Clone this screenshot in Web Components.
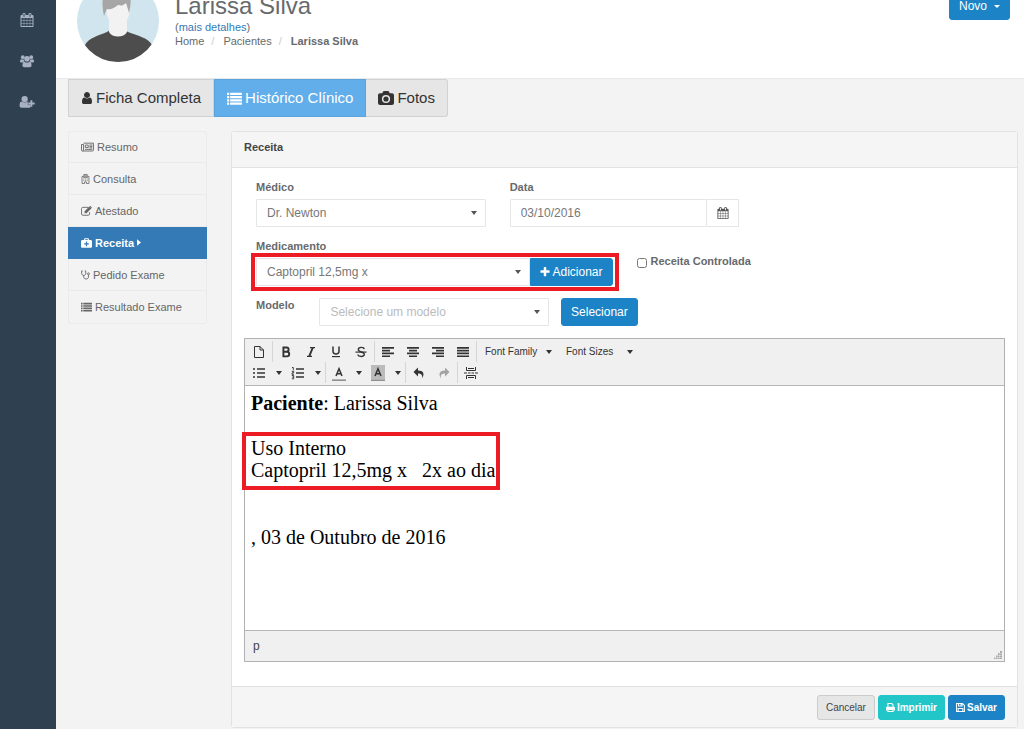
<!DOCTYPE html>
<html lang="pt-BR">
<head>
<meta charset="utf-8">
<meta name="viewport" content="width=device-width, initial-scale=1">
<title>Larissa Silva - Receita</title>
<style>
  html { background: #f3f3f4; }
  body {
    margin: 0;
    font: 11px/14px "Liberation Sans", Arial, sans-serif;
    color: #676a6c;
    --blue: #1c84c6;
    --line: #e5e6e7;
  }
</style>
</head>
<body>
<clinic-app></clinic-app>

<script>
const ICONS = {
  calendar: ['0 0 1792 1792', '<path d="M192 1664h288v-288h-288v288zm352 0h320v-288h-320v288zm-352-352h288v-320h-288v320zm352 0h320v-320h-320v320zm-352-384h288v-288h-288v288zm736 736h320v-288h-320v288zm-384-736h320v-288h-320v288zm768 736h288v-288h-288v288zm-384-352h320v-320h-320v320zm-352-864v-288q0-13-9.5-22.5t-22.5-9.5h-64q-13 0-22.5 9.5t-9.5 22.5v288q0 13 9.5 22.5t22.5 9.5h64q13 0 22.5-9.5t9.5-22.5zm736 864h288v-320h-288v320zm-384-384h320v-288h-320v288zm384 0h288v-288h-288v288zm32-480v-288q0-13-9.5-22.5t-22.5-9.5h-64q-13 0-22.5 9.5t-9.5 22.5v288q0 13 9.5 22.5t22.5 9.5h64q13 0 22.5-9.5t9.5-22.5zm384-64v1280q0 52-38 90t-90 38h-1408q-52 0-90-38t-38-90v-1280q0-52 38-90t90-38h128v-96q0-66 47-113t113-47h64q66 0 113 47t47 113v96h384v-96q0-66 47-113t113-47h64q66 0 113 47t47 113v96h128q52 0 90 38t38 90z"/>'],
  users: ['0 0 16 16', '<circle cx="3.2" cy="3.6" r="2.200"/><circle cx="12.8" cy="3.6" r="2.200"/><circle cx="8" cy="5.4" r="3.200"/><path d="M0 8.6C0 6.8.6 6 1.4 6c.6.4 1.800.6 2.900.2.1 1.100.5 1.800 1 2.300-1 .1-1.800.5-2.300 1.100H1.200C.5 9.600 0 9.300 0 8.600zM16 8.600C16 6.800 15.400 6 14.600 6c-.6.4-1.800.6-2.900.2-.1 1.100-.5 1.800-1 2.300 1 .1 1.800.5 2.300 1.100h1.800c.7 0 1.200-.3 1.200-1zM2.800 13c0-2.600.6-4.200 2.300-4.200 1.700 1.300 4.100 1.300 5.800 0 1.700 0 2.300 1.600 2.300 4.200 0 1.200-.8 2-2 2H4.800c-1.200 0-2-.8-2-2z"/>'],
  userPlus: ['0 0 17 16', '<circle cx="5.800" cy="4.600" r="3.600"/><path d="M0 12.200C0 9.300.8 7.500 2.600 7.500c1.900 1.500 4.500 1.500 6.400 0 .5 0 .9.200 1.300.500H9.400v3h3v3.200c-.3.200-.7.300-1.100.3h-9C.8 14.500 0 13.600 0 12.200z"/><path d="M12.400 6h2.200v2.600h2.700v2.200h-2.700v2.600h-2.200v-2.600H9.900V8.600h2.500z"/>'],
  user: ['192 128 1408 1536', '<path d="M1536 1399q0 109-62.5 187t-150.5 78h-854q-88 0-150.5-78t-62.5-187q0-85 8.5-160.5t31.5-152 58.5-131 94-89 134.5-34.5q131 128 313 128t313-128q76 0 134.5 34.5t94 89 58.5 131 31.5 152 8.5 160.5zm-256-887q0 159-112.5 271.5t-271.5 112.5-271.5-112.5-112.5-271.5 112.5-271.5 271.5-112.5 271.5 112.5 112.5 271.5z"/>'],
  list: ['0 0 16 14', '<path d="M0 .8h2.300v2.400H0zM3.300.8H16v2.400H3.300zM0 4.300h2.300v2.400H0zM3.300 4.300H16v2.400H3.300zM0 7.800h2.300v2.400H0zM3.300 7.800H16v2.400H3.300zM0 11.300h2.300v2.400H0zM3.300 11.300H16v2.400H3.300z"/>'],
  camera: ['0 0 16 14', '<path fill-rule="evenodd" d="M2 2.300h2.300l.6-1.500C5.100.300 5.600 0 6.200 0h3.600c.6 0 1.100.3 1.300.8l.6 1.500H14c1.100 0 2 .9 2 2V12c0 1.100-.9 2-2 2H2c-1.100 0-2-.9-2-2V4.300c0-1.100.9-2 2-2zM8 3.900a4.100 4.100 0 100 8.200 4.100 4.100 0 000-8.200zm0 1.500a2.600 2.600 0 110 5.200 2.600 2.600 0 010-5.200z"/>'],
  news: ['0 0 18 14', '<path fill="none" stroke="currentColor" stroke-width="1.300" d="M3.500 1.600h13.800v9.800c0 .7-.5 1.200-1.200 1.200H2c-.8 0-1.400-.6-1.400-1.400V3.500h2.900v7.600c0 .8-.6 1.500-1.400 1.500M6 4.300h4v3.500H6zM11.700 4.200h4M11.700 6.200h4M11.700 8.200h4M5.500 10.300h10.200"/>'],
  hospital: ['0 0 12 15', '<path fill="none" stroke="currentColor" stroke-width="1.200" d="M3.300 3.600H.8v10.600h3.800v-2.400h2.800v2.400h3.800V3.600H8.700M3.400.8h5.200v4.600H3.400zM5 2v2.200M7 2v2.200M5 3.100h2M2.800 7.500h1.300M5.400 7.500h1.300M8 7.500h1.300M2.800 9.700h1.300M5.400 9.700h1.300M8 9.700h1.300"/>'],
  edit: ['0 0 16 14', '<path fill="none" stroke="currentColor" stroke-width="1.300" d="M11 1.700H2.600c-1 0-1.800.8-1.800 1.800v7.900c0 1 .8 1.800 1.800 1.800h8c1 0 1.800-.8 1.800-1.800V8.800"/><path d="M5.200 7.500 12.300.4l2.800 2.800L8 10.300H5.200zM13 0l.7-.1 1.900 1.800v.8l-.3.400L12.500.4z"/>'],
  medkit: ['0 0 16 14', '<path fill-rule="evenodd" d="M4.500 2.500V1.200C4.500.5 5 0 5.700 0h4.600c.7 0 1.200.5 1.200 1.200v1.300H14c1.100 0 2 .9 2 2V12c0 1.100-.9 2-2 2H2c-1.100 0-2-.9-2-2V4.500c0-1.100.9-2 2-2zM6 2.500h4v-1H6zM7.100 4.800v2.500H4.600v1.800h2.500v2.500h1.800V9.100h2.500V7.300H8.900V4.800z"/>'],
  stethoscope: ['0 0 14 15', '<g fill="none" stroke="currentColor" stroke-width="1.400"><path d="M2.600 1.200H1v3.600c0 2 1.300 3.400 3.200 3.400s3.200-1.400 3.200-3.400V1.200H5.800M4.200 8.200v2.300c0 2 1.500 3.200 3.700 3.200s3.700-1.200 3.700-3.200V7.200"/><circle cx="11.600" cy="5.600" r="1.500"/></g>'],
  right: ['0 0 6 10', '<path d="M0 0l6 5-6 5z"/>'],
  plus: ['128 128 1536 1536', '<path d="M1600 736v192q0 40-28 68t-68 28h-416v416q0 40-28 68t-68 28h-192q-40 0-68-28t-28-68v-416h-416q-40 0-68-28t-28-68v-192q0-40 28-68t68-28h416v-416q0-40 28-68t68-28h192q40 0 68 28t28 68v416h416q40 0 68 28t28 68z"/>'],
  print: ['0 0 14 14', '<path fill="none" stroke="currentColor" stroke-width="1.600" d="M3 6.500V.9h6l2 2v3.600M3 10.200h8v3H3z"/><path fill-rule="evenodd" d="M2 6h10c1.100 0 2 .8 2 1.900v3.600h-2.300V9.300H2.300v2.200H0V7.900C0 6.800.9 6 2 6z"/>'],
  save: ['0 0 14 14', '<path fill="none" stroke="currentColor" stroke-width="1.600" d="M.9.9h9.200l3 3v9.200H.9zM3.400 13V8.500h7.200V13M4 1v3.700h5.400V1"/><path d="M7 1.300h1.700v2.700H7z"/>'],
  page: ['0 0 14 14', '<path fill="none" stroke="currentColor" d="M2.500 1.500h5.500l3.500 3.500v7.500h-9zM8 1.500V5h3.500"/>'],
  bold: ['0 0 14 14', '<path fill="none" stroke="currentColor" stroke-width="1.900" d="M4.400 2.500h3.200c2.700 0 2.700 4.200 0 4.200H4.400zM4.400 6.700h3.500c3.100 0 3.100 4.700 0 4.700H4.400z"/>'],
  italic: ['0 0 14 14', '<path fill="none" stroke="currentColor" stroke-width="1.200" d="M6 2.600h5M3 11.400h5"/><path fill="none" stroke="currentColor" stroke-width="1.900" d="M8.800 2.600 5.200 11.400"/>'],
  underline: ['0 0 14 14', '<path fill="none" stroke="currentColor" stroke-width="1.500" d="M4 1.500v4.800c0 3.600 6 3.600 6 0V1.500"/><path d="M3 11h8v1.200H3z"/>'],
  strike: ['0 0 14 14', '<path fill="none" stroke="currentColor" stroke-width="1.400" d="M10.200 4.200C9.800 1.800 4.400 1.700 4.300 4.500c0 3.100 6 1.900 6 4.900 0 2.800-6 2.600-6.400.1"/><path d="M1.500 6.500h11v1.200h-11z"/>'],
  left: ['0 0 14 14', '<path d="M1 2h12v1.700H1zM1 4.800h8v1.700H1zM1 7.600h12v1.700H1zM1 10.400h8v1.700H1z"/>'],
  center: ['0 0 14 14', '<path d="M1 2h12v1.700H1zM3 4.800h8v1.700H3zM1 7.600h12v1.700H1zM3 10.400h8v1.700H3z"/>'],
  alignRight: ['0 0 14 14', '<path d="M1 2h12v1.700H1zM5 4.800h8v1.700H5zM1 7.600h12v1.700H1zM5 10.400h8v1.700H5z"/>'],
  justify: ['0 0 14 14', '<path d="M1 2h12v1.700H1zM1 4.800h12v1.700H1zM1 7.600h12v1.700H1zM1 10.400h12v1.700H1z"/>'],
  bullets: ['0 0 14 14', '<path d="M1 2.200h2v1.600H1zM1 6.200h2v1.600H1zM1 10.200h2v1.600H1zM5 2.200h8v1.600H5zM5 6.200h8v1.600H5zM5 10.200h8v1.600H5z"/>'],
  numbers: ['0 0 14 14', '<path d="M5 2.200h8v1.600H5zM5 6.200h8v1.600H5zM5 10.200h8v1.600H5z"/><path fill="none" stroke="currentColor" stroke-width=".9" d="M1 1.500h1.300v3M.8 5.500h1.900v1.400H1v1.400h1.900M.8 9.500h1.900v3.300H.8M1.200 11.100h1.500"/>'],
  fore: ['0 0 14 16', '<path fill="none" stroke="currentColor" stroke-width="1.500" d="M4 11 7 3.800 10 11M5 8.700h4"/><path fill="#777" d="M0 14.500h14v1.300H0z"/>'],
  back: ['0 0 14 16', '<path fill="#bbb" d="M0 0h14v14H0z"/><path fill="none" stroke="currentColor" stroke-width="1.500" d="M4 11 7 3.800 10 11M5 8.700h4"/><path fill="#777" d="M0 14.500h14v1.300H0z"/>'],
  undo: ['0 0 14 14', '<path d="M6 1.500v3c5.500 0 7 3.500 4 8 .8-3.500-.5-5-4-5v3L1.500 6z"/>'],
  redo: ['0 0 14 14', '<path d="M8 1.500v3c-5.500 0-7 3.500-4 8-.8-3.500.5-5 4-5v3L12.500 6z"/>'],
  pagebreak: ['0 0 14 14', '<path fill="none" stroke="currentColor" d="M2.500 1v3.500h9V1M2.500 13V9.500h9V13M4 2.500h6M4 11.500h6"/><path d="M0 6.500h3v1H0zM4 6.500h2.500v1H4zM7.500 6.500H10v1H7.500zM11 6.500h3v1h-3z"/>']
};

function define(name, html, extra) {
  const tpl = document.createElement('template');
  tpl.innerHTML = '<style>*,*::before,*::after{box-sizing:border-box}:host{box-sizing:border-box}</style>' + html;
  customElements.define(name, class extends HTMLElement {
    constructor() {
      super();
      this.attachShadow({ mode: 'open' }).append(tpl.content.cloneNode(true));
    }
    connectedCallback() { if (extra) extra(this, this.shadowRoot); }
  });
}

/* Icon: <ui-icon name="user"> sized through --w and --h */
define('ui-icon', `
<style>
  :host { display: inline-block; width: var(--w, 12px); height: var(--h, 12px); vertical-align: middle; flex: none; }
  svg { display: block; width: 100%; height: 100%; fill: currentColor; }
</style>
<svg aria-hidden="true"></svg>`, (el, root) => {
  const [box, body] = ICONS[el.getAttribute('name')];
  const svg = root.querySelector('svg');
  svg.setAttribute('viewBox', box);
  svg.innerHTML = body;
});

/* Push button: kind = primary | info | plain, size = small | medium */
define('ui-button', `
<style>
  :host { display: inline-block; flex: none; }
  button {
    display: flex; align-items: center; gap: 2px; height: 28px; padding: 0 9px;
    border: 1px solid var(--blue); border-radius: 3px; background: var(--blue); color: #fff;
    font: inherit; font-size: 12px; line-height: 16px; white-space: nowrap; cursor: pointer;
  }
  :host([size=small]) button { height: 25px; padding: 0 7px; font-size: 10px; }
  :host([kind=info]) button { background: #23c6c8; border-color: #23c6c8; }
  :host([kind=plain]) button { padding: 0 8px; background: #e6e6e6; border-color: #ccc; color: #444; }
  :host([joined]) button { border-radius: 0 3px 3px 0; }
</style>
<button type="button"><slot></slot></button>`);

/* Drop-down with a caret at the right */
define('ui-select', `
<style>
  :host { display: grid; position: relative; min-width: 0; }
  label { display: none; }
  :host([label]) label { display: block; font-weight: bold; margin-bottom: 5px; }
  select {
    appearance: none; width: 100%; height: 28px; padding: 0 24px 0 10px; margin: 0;
    border: 1px solid var(--line); border-radius: 1px; background: #fff; color: #777;
    font: inherit; font-size: 12px;
  }
  :host([placeholder]) select { color: #bbb; }
  i {
    position: absolute; right: 9px; bottom: 12px; pointer-events: none;
    border: 3px solid transparent; border-top: 4px solid #555; border-bottom: 0;
  }
</style>
<label for="s"></label>
<select id="s"></select><i></i>`, (el, root) => {
  root.querySelector('label').textContent = el.getAttribute('label') || '';
  const select = root.querySelector('select');
  select.replaceChildren(new Option(el.getAttribute('value')));
  if (!el.hasAttribute('label')) select.setAttribute('aria-label', el.getAttribute('name'));
});

define('nav-rail', `
<style>
  :host { display: block; background: #2f4050; }
  nav { display: grid; justify-items: center; row-gap: 25px; padding: 12px 2px 0 0; --w: 14px; --h: 14px; }
  a { display: flex; height: 16px; align-items: center; color: #a7b1c2; }
</style>
<nav>
  <a href="#agenda" aria-label="Agenda"><ui-icon name="calendar"></ui-icon></a>
  <a href="#pacientes" aria-label="Pacientes"><ui-icon name="users"></ui-icon></a>
  <a href="#novo" aria-label="Novo paciente"><ui-icon name="userPlus" style="--w:16px"></ui-icon></a>
</nav>`);

define('patient-header', `
<style>
  :host { display: block; background: #fff; border-bottom: 1px solid #e7eaec; overflow: hidden; }
  header { display: flex; margin-top: -20px; padding: 0 14px 16px 21px; }
  .avatar { flex: none; width: 82px; height: 82px; border-radius: 50%; }
  .who { flex: 1; padding: 12px 16px 0; }
  h2 { margin: 0; font-size: 24px; line-height: 28px; font-weight: normal; }
  a { color: #337ab7; text-decoration: none; }
  ol { display: flex; margin: 0; padding: 0; list-style: none; line-height: 14px; }
  ol a { color: inherit; }
  li + li::before { content: "/"; color: #ccc; padding: 0 9px 0 7px; }
  ui-button { margin-top: 12px; }
  i { border: 3px solid transparent; border-top: 3px solid #fff; border-bottom: 0; margin-left: 5px; }
</style>
<header>
  <svg class="avatar" viewBox="0 0 82 82" role="img" aria-label="Foto do paciente">
    <path fill="#d0e5ee" d="M0 0h82v82H0z"/>
    <path fill="#4d4d4d" d="M8 65c4-7 12-9 22-13l3-2h15l3 2c11 4 20 6 24 13v17H8z"/>
    <path fill="#f2f2f2" d="M32 24h18v28c-3 6-15 6-18 0z"/>
    <ellipse cx="41" cy="27" rx="12" ry="20" fill="#f2f2f2"/>
    <path fill="#a6a6a6" d="M27 36C22 12 30 6 41 6c12 0 15 10 11 27-1-4-2-7-3-10-5 4-5 2-8 2-5 4-8 5-11 4-1 2-2 4-3 7z"/>
  </svg>
  <div class="who">
    <h2>Larissa Silva</h2>
    <div>(<a href="#detalhes">mais detalhes</a>)</div>
    <ol>
      <li><a href="#home">Home</a></li>
      <li><a href="#pacientes">Pacientes</a></li>
      <li><b>Larissa Silva</b></li>
    </ol>
  </div>
  <ui-button>Novo <i></i></ui-button>
</header>`);

define('tab-bar', `
<style>
  :host { display: flex; }
  a {
    display: flex; align-items: center; gap: 3px; height: 38px; padding: 0 12px;
    background: #e6e6e6; border: 1px solid #d2d2d2; color: #333;
    font-size: 15px; line-height: 20px; text-decoration: none; white-space: nowrap;
  }
  a:first-child { border-radius: 3px 0 0 3px; border-right: 0; padding-left: 13px; --w: 12px; --h: 13px; }
  a:last-child { border-radius: 0 3px 3px 0; border-left: 0; --w: 16px; --h: 14px; }
  .on { background: #62aeea; border-color: #5ba3dd; color: #fff; --w: 15px; --h: 13px; }
</style>
<a href="#ficha"><ui-icon name="user"></ui-icon>Ficha Completa</a>
<a class="on" href="#historico"><ui-icon name="list"></ui-icon>Histórico Clínico</a>
<a href="#fotos"><ui-icon name="camera"></ui-icon>Fotos</a>`);

define('side-menu', `
<style>
  :host { display: block; }
  nav { border: 1px solid #ebebeb; border-top: 0; border-radius: 3px; --h: 10px; box-shadow: inset 0 1px #ebebeb; }
  a {
    display: flex; align-items: center; gap: 3px; height: 32px; padding: 0 12px;
    color: #666; text-decoration: none; border-bottom: 1px solid #eaeaea;
  }
  a:last-child { border-bottom: 0; }
  .on { background: #337ab7; border-color: #337ab7; color: #fff; margin: 0 -1px; padding: 0 13px; font-weight: bold; }
</style>
<nav>
  <a href="#resumo"><ui-icon name="news" style="--w:13px"></ui-icon>Resumo</a>
  <a href="#consulta"><ui-icon name="hospital" style="--w:9px"></ui-icon>Consulta</a>
  <a href="#atestado"><ui-icon name="edit" style="--w:11px"></ui-icon>Atestado</a>
  <a class="on" href="#receita"><ui-icon name="medkit" style="--w:11px"></ui-icon>Receita<ui-icon name="right" style="--w:4px;--h:7px"></ui-icon></a>
  <a href="#pedido"><ui-icon name="stethoscope" style="--w:9px"></ui-icon>Pedido Exame</a>
  <a href="#resultado"><ui-icon name="list" style="--w:11px"></ui-icon>Resultado Exame</a>
</nav>`);

/* Highlight frame drawn over whatever is slotted */
define('mark-frame', `
<style>
  :host { display: block; position: relative; }
  :host::after {
    content: ""; position: absolute; inset: var(--out, -5px -6px -5px -5px); border: 4px solid #ed1c24; pointer-events: none;
  }
</style>
<slot></slot>`);

define('rich-editor', `
<style>
  :host { display: block; border: 1px solid #b1b1b1; background: #fff; }
  [role=toolbar] { background: #f0f0f0; border-bottom: 1px solid #b7b7b7; padding: 2px 1px; color: #333; }
  .row { display: flex; height: 21px; }
  .group { display: flex; gap: 1px; padding: 0 1px; }
  .group + .group { border-left: 1px solid #d6d6d6; }
  button {
    display: flex; align-items: center; justify-content: center; width: 24px; height: 21px;
    padding: 0; border: 0; background: none; color: inherit; font: inherit; font-size: 10px; white-space: nowrap;
    --w: 14px; --h: 14px;
  }
  button.drop { width: 13px; }
  button.menu { width: 80px; justify-content: space-between; padding: 0 6px 0 7px; }
  button.off { opacity: .4; }
  button.tall { --h: 16px; }
  i { border: 3px solid transparent; border-top: 4px solid #333; border-bottom: 0; }
  .page { min-height: 244px; padding: 6px; font: 20px/22px "Liberation Serif", "Times New Roman", serif; color: #000; outline: 0; }
  p { margin: 0 0 23px; }
  mark-frame { width: fit-content; margin-bottom: 45px; --out: -5px -5px -9px -9px; }
  mark-frame p { margin: 0; white-space: pre-wrap; }
  footer { display: flex; justify-content: space-between; height: 31px; padding: 8px 8px 0; background: #f0f0f0; border-top: 1px solid #b7b7b7; font-size: 12px; color: #444; }
  .grip { align-self: flex-end; width: 8px; height: 8px; margin: 0 -6px 2px 0; fill: #aaa; }
</style>
<div role="toolbar" aria-label="Formatação">
  <div class="row">
    <div class="group"><button aria-label="Novo documento"><ui-icon name="page"></ui-icon></button></div>
    <div class="group">
      <button aria-label="Negrito"><ui-icon name="bold"></ui-icon></button>
      <button aria-label="Itálico"><ui-icon name="italic"></ui-icon></button>
      <button aria-label="Sublinhado"><ui-icon name="underline"></ui-icon></button>
      <button aria-label="Tachado"><ui-icon name="strike"></ui-icon></button>
    </div>
    <div class="group">
      <button aria-label="Alinhar à esquerda"><ui-icon name="left"></ui-icon></button>
      <button aria-label="Centralizar"><ui-icon name="center"></ui-icon></button>
      <button aria-label="Alinhar à direita"><ui-icon name="alignRight"></ui-icon></button>
      <button aria-label="Justificar"><ui-icon name="justify"></ui-icon></button>
    </div>
    <div class="group">
      <button class="menu">Font Family<i></i></button>
      <button class="menu">Font Sizes<i></i></button>
    </div>
  </div>
  <div class="row">
    <div class="group">
      <button aria-label="Marcadores"><ui-icon name="bullets"></ui-icon></button><button class="drop" aria-label="Tipos de marcador"><i></i></button>
      <button aria-label="Numeração"><ui-icon name="numbers"></ui-icon></button><button class="drop" aria-label="Tipos de numeração"><i></i></button>
    </div>
    <div class="group">
      <button class="tall" aria-label="Cor do texto"><ui-icon name="fore"></ui-icon></button><button class="drop" aria-label="Escolher cor do texto"><i></i></button>
      <button class="tall" aria-label="Cor de fundo"><ui-icon name="back"></ui-icon></button><button class="drop" aria-label="Escolher cor de fundo"><i></i></button>
    </div>
    <div class="group">
      <button aria-label="Desfazer"><ui-icon name="undo"></ui-icon></button>
      <button class="off" aria-label="Refazer"><ui-icon name="redo"></ui-icon></button>
    </div>
    <div class="group"><button aria-label="Quebra de página"><ui-icon name="pagebreak"></ui-icon></button></div>
  </div>
</div>
<div class="page" contenteditable="true" spellcheck="false" role="textbox" aria-multiline="true" aria-label="Texto da receita">
  <p><b>Paciente</b>: Larissa Silva</p>
  <mark-frame><p>Uso Interno</p><p>Captopril 12,5mg x &nbsp; 2x ao dia</p></mark-frame>
  <p>, 03 de Outubro de 2016</p>
</div>
<footer>p
  <svg class="grip" viewBox="0 0 8 8" aria-hidden="true"><path d="M6 0h2v2H6zM4 2h1.600v2H4zM6 2.500h2v1.600H6zM2 4.500h1.600v1.600H2zM4 4.500h1.600v1.600H4zM6 4.500h2v1.600H6zM0 6.500h1.600V8H0zM2 6.500h1.600V8H2zM4 6.500h1.600V8H4zM6 6.500h2V8H6z"/></svg>
</footer>`);

define('recipe-panel', `
<style>
  :host { display: block; background: #fff; border: 1px solid #e2e2e2; border-radius: 3px; min-width: 0; }
  h3 { margin: 0; padding: 8px 12px 13px; font-size: 11px; line-height: 14px; color: #444; background: #f5f5f5; border-bottom: 1px solid #e2e2e2; }
  .body { padding: 12px 12px 24px; }
  form { display: grid; grid-template-columns: repeat(12, minmax(0, 1fr)); gap: 12px 24px; padding: 0 12px; margin-bottom: 12px; }
  .c4 { grid-column: span 4; }
  .c6 { grid-column: span 6; }
  .c5 { grid-column: span 5; }
  .end { grid-column: 9 / -1; }
  label { font-weight: bold; white-space: nowrap; }
  .field > label { display: block; margin-bottom: 5px; }
  .join { display: flex; }
  .join input {
    flex: 1; min-width: 0; height: 28px; padding: 0 10px; border: 1px solid var(--line); border-radius: 1px 0 0 1px;
    color: #777; font: inherit; font-size: 12px;
  }
  .join button { display: grid; place-items: center; width: 32px; height: 28px; padding: 0; border: 1px solid var(--line); border-left: 0; background: #fff; color: #555; --w: 12px; --h: 12px; }
  .join ui-select { flex: 1; }
  .join ui-button { --w: 10px; --h: 10px; }
  .check { display: flex; align-items: flex-start; gap: 4px; margin-top: 15px; }
  .check input { width: 10px; height: 10px; margin: 4px 0 0; }
  .near { margin-left: -12px; }
  .foot { display: flex; justify-content: flex-end; gap: 3px; padding: 8px 12px 7px; background: #f5f5f5; border-top: 1px solid #e2e2e2; --w: 9px; --h: 9px; }
</style>
<h3>Receita</h3>
<div class="body">
  <form>
    <ui-select class="c4" label="Médico" value="Dr. Newton"></ui-select>
    <div class="c4 field">
      <label for="date">Data</label>
      <div class="join"><input id="date" type="text" value="03/10/2016"><button type="button" aria-label="Abrir calendário"><ui-icon name="calendar"></ui-icon></button></div>
    </div>
    <span class="end"></span>
    <div class="c6 field">
      <label>Medicamento</label>
      <mark-frame><div class="join">
        <ui-select name="Medicamento" value="Captopril 12,5mg x"></ui-select>
        <ui-button joined><ui-icon name="plus"></ui-icon>Adicionar</ui-button>
      </div></mark-frame>
    </div>
    <div class="c6 check"><input id="ctrl" type="checkbox"><label for="ctrl">Receita Controlada</label></div>
    <label>Modelo</label>
    <ui-select class="c4" placeholder name="Modelo" value="Selecione um modelo"></ui-select>
    <div class="c5 near"><ui-button>Selecionar</ui-button></div>
  </form>
  <rich-editor></rich-editor>
</div>
<div class="foot">
  <ui-button size="small" kind="plain">Cancelar</ui-button>
  <ui-button size="small" kind="info"><ui-icon name="print"></ui-icon><b>Imprimir</b></ui-button>
  <ui-button size="small"><ui-icon name="save"></ui-icon><b>Salvar</b></ui-button>
</div>`);

define('clinic-app', `
<style>
  :host { display: grid; grid-template-columns: 56px minmax(0, 1fr); min-height: 100vh; }
  .content { padding: 0 6px 0 12px; }
  .cols { display: grid; grid-template-columns: 139px minmax(0, 1fr); column-gap: 24px; align-items: start; margin-top: 14px; }
</style>
<nav-rail></nav-rail>
<main>
  <patient-header></patient-header>
  <div class="content">
    <tab-bar></tab-bar>
    <div class="cols">
      <side-menu></side-menu>
      <recipe-panel></recipe-panel>
    </div>
  </div>
</main>`);
</script>
</body>
</html>
